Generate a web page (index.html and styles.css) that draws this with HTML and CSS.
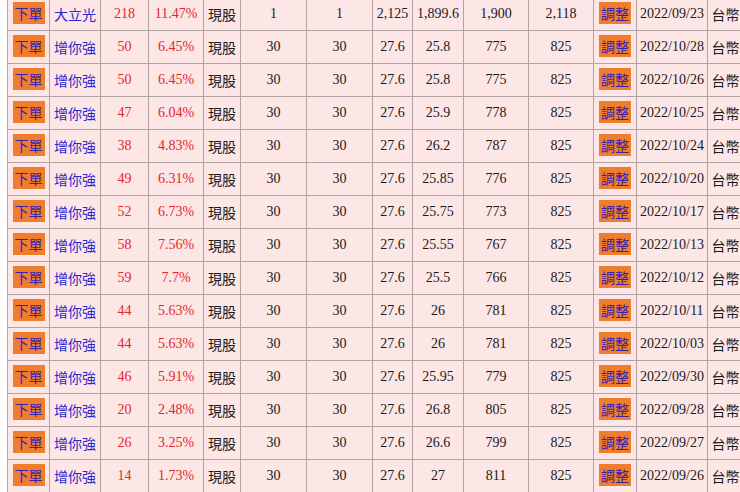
FILE: index.html
```html
<!DOCTYPE html>
<html lang="zh-Hant">
<head>
<meta charset="utf-8">
<title>庫存</title>
<link rel="stylesheet" href="styles.css">
</head>
<body>
<table class="grid">
<colgroup>
<col class="c-btn"><col class="c-name"><col class="c-n1"><col class="c-pct"><col class="c-kind">
<col class="c-q"><col class="c-q"><col class="c-p"><col class="c-p2"><col class="c-v"><col class="c-v">
<col class="c-adj"><col class="c-date"><col class="c-cur">
</colgroup>
<tbody>
<tr><td><span class="btn">下單</span></td><td class="name">大立光</td><td class="red">218</td><td class="red">11.47%</td><td class="cjk">現股</td><td>1</td><td>1</td><td>2,125</td><td>1,899.6</td><td>1,900</td><td>2,118</td><td><span class="btn">調整</span></td><td>2022/09/23</td><td class="cjk">台幣</td></tr>
<tr><td><span class="btn">下單</span></td><td class="name">增你強</td><td class="red">50</td><td class="red">6.45%</td><td class="cjk">現股</td><td>30</td><td>30</td><td>27.6</td><td>25.8</td><td>775</td><td>825</td><td><span class="btn">調整</span></td><td>2022/10/28</td><td class="cjk">台幣</td></tr>
<tr><td><span class="btn">下單</span></td><td class="name">增你強</td><td class="red">50</td><td class="red">6.45%</td><td class="cjk">現股</td><td>30</td><td>30</td><td>27.6</td><td>25.8</td><td>775</td><td>825</td><td><span class="btn">調整</span></td><td>2022/10/26</td><td class="cjk">台幣</td></tr>
<tr><td><span class="btn">下單</span></td><td class="name">增你強</td><td class="red">47</td><td class="red">6.04%</td><td class="cjk">現股</td><td>30</td><td>30</td><td>27.6</td><td>25.9</td><td>778</td><td>825</td><td><span class="btn">調整</span></td><td>2022/10/25</td><td class="cjk">台幣</td></tr>
<tr><td><span class="btn">下單</span></td><td class="name">增你強</td><td class="red">38</td><td class="red">4.83%</td><td class="cjk">現股</td><td>30</td><td>30</td><td>27.6</td><td>26.2</td><td>787</td><td>825</td><td><span class="btn">調整</span></td><td>2022/10/24</td><td class="cjk">台幣</td></tr>
<tr><td><span class="btn">下單</span></td><td class="name">增你強</td><td class="red">49</td><td class="red">6.31%</td><td class="cjk">現股</td><td>30</td><td>30</td><td>27.6</td><td>25.85</td><td>776</td><td>825</td><td><span class="btn">調整</span></td><td>2022/10/20</td><td class="cjk">台幣</td></tr>
<tr><td><span class="btn">下單</span></td><td class="name">增你強</td><td class="red">52</td><td class="red">6.73%</td><td class="cjk">現股</td><td>30</td><td>30</td><td>27.6</td><td>25.75</td><td>773</td><td>825</td><td><span class="btn">調整</span></td><td>2022/10/17</td><td class="cjk">台幣</td></tr>
<tr><td><span class="btn">下單</span></td><td class="name">增你強</td><td class="red">58</td><td class="red">7.56%</td><td class="cjk">現股</td><td>30</td><td>30</td><td>27.6</td><td>25.55</td><td>767</td><td>825</td><td><span class="btn">調整</span></td><td>2022/10/13</td><td class="cjk">台幣</td></tr>
<tr><td><span class="btn">下單</span></td><td class="name">增你強</td><td class="red">59</td><td class="red">7.7%</td><td class="cjk">現股</td><td>30</td><td>30</td><td>27.6</td><td>25.5</td><td>766</td><td>825</td><td><span class="btn">調整</span></td><td>2022/10/12</td><td class="cjk">台幣</td></tr>
<tr><td><span class="btn">下單</span></td><td class="name">增你強</td><td class="red">44</td><td class="red">5.63%</td><td class="cjk">現股</td><td>30</td><td>30</td><td>27.6</td><td>26</td><td>781</td><td>825</td><td><span class="btn">調整</span></td><td>2022/10/11</td><td class="cjk">台幣</td></tr>
<tr><td><span class="btn">下單</span></td><td class="name">增你強</td><td class="red">44</td><td class="red">5.63%</td><td class="cjk">現股</td><td>30</td><td>30</td><td>27.6</td><td>26</td><td>781</td><td>825</td><td><span class="btn">調整</span></td><td>2022/10/03</td><td class="cjk">台幣</td></tr>
<tr><td><span class="btn">下單</span></td><td class="name">增你強</td><td class="red">46</td><td class="red">5.91%</td><td class="cjk">現股</td><td>30</td><td>30</td><td>27.6</td><td>25.95</td><td>779</td><td>825</td><td><span class="btn">調整</span></td><td>2022/09/30</td><td class="cjk">台幣</td></tr>
<tr><td><span class="btn">下單</span></td><td class="name">增你強</td><td class="red">20</td><td class="red">2.48%</td><td class="cjk">現股</td><td>30</td><td>30</td><td>27.6</td><td>26.8</td><td>805</td><td>825</td><td><span class="btn">調整</span></td><td>2022/09/28</td><td class="cjk">台幣</td></tr>
<tr><td><span class="btn">下單</span></td><td class="name">增你強</td><td class="red">26</td><td class="red">3.25%</td><td class="cjk">現股</td><td>30</td><td>30</td><td>27.6</td><td>26.6</td><td>799</td><td>825</td><td><span class="btn">調整</span></td><td>2022/09/27</td><td class="cjk">台幣</td></tr>
<tr><td><span class="btn">下單</span></td><td class="name">增你強</td><td class="red">14</td><td class="red">1.73%</td><td class="cjk">現股</td><td>30</td><td>30</td><td>27.6</td><td>27</td><td>811</td><td>825</td><td><span class="btn">調整</span></td><td>2022/09/26</td><td class="cjk">台幣</td></tr>
</tbody>
</table>
</body>
</html>
```
FILE: styles.css
```css
html, body {
  margin: 0;
  padding: 0;
  overflow: hidden;
  background: #ffffff;
}

body {
  font-family: "Liberation Serif", "Noto Sans CJK TC", serif;
  font-size: 14px;
  color: #1a1a1a;
}

.grid {
  border-collapse: collapse;
  table-layout: fixed;
  width: 736px;
  margin: -3px 0 0 7px;
  background: #fde6e6;
}

.grid td {
  border: 1px solid #b3a4a4;
  height: 32px;
  padding: 0;
  text-align: center;
  vertical-align: middle;
  white-space: nowrap;
  overflow: hidden;
  line-height: 18px;
}

.c-btn { width: 42px; }
.c-name { width: 51px; }
.c-n1 { width: 48px; }
.c-pct { width: 55px; }
.c-kind { width: 37px; }
.c-q { width: 66px; }
.c-p { width: 40px; }
.c-p2 { width: 51px; }
.c-v { width: 65px; }
.c-adj { width: 43px; }
.c-date { width: 71px; }
.c-cur { width: 36px; }

.grid td.red {
  color: #e3262b;
}

.grid td.name {
  font-family: "Noto Sans CJK TC", sans-serif;
  color: #2828d0;
}

.grid td.cjk {
  font-family: "Noto Sans CJK TC", sans-serif;
  color: #1a1a1a;
}

.btn {
  display: inline-block;
  font-family: "Noto Sans CJK TC", sans-serif;
  font-size: 14px;
  line-height: 22px;
  padding: 0 2px;
  background: #f07d2c;
  color: #3a22a8;
  vertical-align: middle;
  margin-top: -3px;
}
```
